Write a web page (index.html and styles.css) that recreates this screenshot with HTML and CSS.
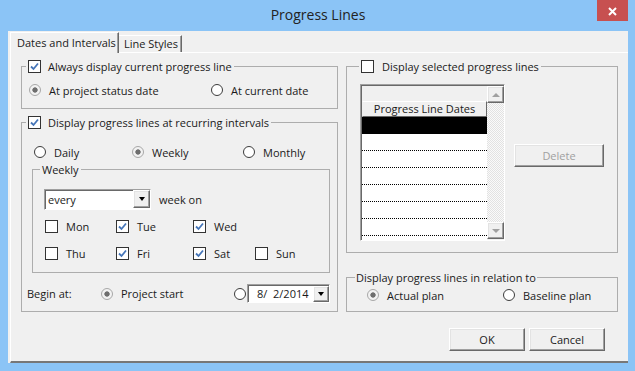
FILE: index.html
```html
<!DOCTYPE html>
<html lang="en">
<head>
  <meta charset="UTF-8" />
  <title>Progress Lines</title>
  <link rel="stylesheet" href="styles.css">
</head>
<body>
  <div class="window">

    <div class="titlebar">
      <span class="title">Progress Lines</span>
      <span class="close" title="Close">
        <svg width="31" height="21" viewBox="0 0 31 21"><path d="M12 8 L19 15 M19 8 L12 15" stroke="#fff" stroke-width="2" fill="none"/></svg>
      </span>
    </div>

    <div class="client">
      <div class="tabs">
        <div class="tab active">Dates and Intervals</div>
        <div class="tab">Line Styles</div>
      </div>

      <div class="page">
        <div class="columns">

          <!-- left column -->
          <div class="col col-left">
            <fieldset class="group g-current">
              <legend>
                <span class="check on"><svg width="11" height="11" viewBox="0 0 11 11"><path d="M2 5.5 L4.5 8 L9 2.5" stroke="#4575b8" stroke-width="1.8" fill="none"/></svg></span>
                <span>Always display current progress line</span>
              </legend>
              <div class="opt-row">
                <label class="opt"><span class="radio on"></span>At project status date</label>
                <label class="opt"><span class="radio"></span>At current date</label>
              </div>
            </fieldset>

            <fieldset class="group g-recurring">
              <legend>
                <span class="check on"><svg width="11" height="11" viewBox="0 0 11 11"><path d="M2 5.5 L4.5 8 L9 2.5" stroke="#4575b8" stroke-width="1.8" fill="none"/></svg></span>
                <span>Display progress lines at recurring intervals</span>
              </legend>
              <div class="opt-row">
                <label class="opt"><span class="radio"></span>Daily</label>
                <label class="opt"><span class="radio on"></span>Weekly</label>
                <label class="opt"><span class="radio"></span>Monthly</label>
              </div>

              <fieldset class="group g-weekly">
                <legend>Weekly</legend>
                <div class="every-row">
                  <div class="combo">
                    <span class="combo-text">every</span>
                    <span class="drop drop-combo"></span>
                  </div>
                  <span class="week-on">week on</span>
                </div>
                <div class="days">
                  <label class="opt day"><span class="check"></span>Mon</label>
                  <label class="opt day"><span class="check on"><svg width="11" height="11" viewBox="0 0 11 11"><path d="M2 5.5 L4.5 8 L9 2.5" stroke="#4575b8" stroke-width="1.8" fill="none"/></svg></span>Tue</label>
                  <label class="opt day"><span class="check on"><svg width="11" height="11" viewBox="0 0 11 11"><path d="M2 5.5 L4.5 8 L9 2.5" stroke="#4575b8" stroke-width="1.8" fill="none"/></svg></span>Wed</label>
                  <label class="opt day row-start"><span class="check"></span>Thu</label>
                  <label class="opt day"><span class="check on"><svg width="11" height="11" viewBox="0 0 11 11"><path d="M2 5.5 L4.5 8 L9 2.5" stroke="#4575b8" stroke-width="1.8" fill="none"/></svg></span>Fri</label>
                  <label class="opt day"><span class="check on"><svg width="11" height="11" viewBox="0 0 11 11"><path d="M2 5.5 L4.5 8 L9 2.5" stroke="#4575b8" stroke-width="1.8" fill="none"/></svg></span>Sat</label>
                  <label class="opt day"><span class="check"></span>Sun</label>
                </div>
              </fieldset>

              <div class="begin-row">
                <span class="begin-label">Begin at:</span>
                <label class="opt begin-start"><span class="radio on"></span>Project start</label>
                <span class="radio"></span>
                <div class="datebox">
                  <span class="date-text">8/&nbsp; 2/2014</span>
                  <span class="drop drop-date"></span>
                </div>
              </div>
            </fieldset>
          </div>

          <!-- right column -->
          <div class="col col-right">
            <fieldset class="group g-selected">
              <legend>
                <span class="check"></span>
                <span>Display selected progress lines</span>
              </legend>
              <div class="list-row">
                <div class="listbox">
                  <div class="lb-grid">
                    <div class="lb-blank"></div>
                    <div class="lb-head">Progress Line Dates</div>
                    <div class="lb-row current"></div>
                    <div class="lb-row"></div>
                    <div class="lb-row"></div>
                    <div class="lb-row"></div>
                    <div class="lb-row"></div>
                    <div class="lb-row"></div>
                    <div class="lb-row"></div>
                    <div class="lb-row"></div>
                  </div>
                  <div class="scrollbar">
                    <span class="sb-btn sb-up"></span>
                    <span class="sb-track"></span>
                    <span class="sb-btn sb-down"></span>
                  </div>
                </div>
                <button class="btn btn-delete" disabled>Delete</button>
              </div>
            </fieldset>

            <fieldset class="group g-relation">
              <legend>Display progress lines in relation to</legend>
              <div class="opt-row">
                <label class="opt"><span class="radio on"></span>Actual plan</label>
                <label class="opt"><span class="radio"></span>Baseline plan</label>
              </div>
            </fieldset>
          </div>
        </div>

        <div class="actions">
          <button class="btn">OK</button>
          <button class="btn">Cancel</button>
        </div>
      </div>
    </div>

  </div>
</body>
</html>
```

FILE: styles.css
```css
* {
  box-sizing: border-box;
}

body {
  margin: 0;
  font-family: "Open Sans", "Noto Sans", sans-serif;
  font-size: 11px;
  color: #1a1a1a;
  background: #8bc4f6;
}

/* Window frame */
.window {
  width: 635px;
  height: 371px;
  background: #8bc4f6;
  display: flex;
  flex-direction: column;
  padding: 0 7px 8px 8px;
}

.titlebar {
  flex: none;
  height: 31px;
  display: grid;
  grid-template-columns: 1fr auto 1fr;
  align-items: start;
}

.title {
  grid-column: 2;
  font-size: 14px;
  line-height: 29px;
  color: #222;
}

.close {
  grid-column: 3;
  justify-self: end;
  width: 31px;
  height: 21px;
  background: #c75050;
  display: flex;
}

.client {
  flex: 1;
  background: #f0f0f0;
  display: flex;
  flex-direction: column;
  padding-left: 2px;
}

/* Tabs */
.tabs {
  flex: none;
  height: 20px;
  margin-top: 1px;
  display: flex;
  align-items: flex-end;
}

.tab {
  height: 17px;
  width: 63px;
  line-height: 16px;
  padding-left: 5px;
  background: #f0f0f0;
  border-top: 1px solid #fff;
  border-right: 1px solid #696969;
  box-shadow: inset -1px 0 #a0a0a0;
  white-space: nowrap;
}

.tab.active {
  position: relative;
  z-index: 1;
  width: 109px;
  height: 21px;
  margin-bottom: -1px;
  line-height: 15px;
  padding: 2px 0 0 6px;
  border-left: 1px solid #fff;
}

.page {
  flex: 1;
  background: #f0f0f0;
  border-top: 1px solid #fff;
  border-left: 1px solid #fff;
  border-bottom: 2px solid #777;
  padding-left: 10px;
  display: flex;
  flex-direction: column;
}

.columns {
  display: flex;
  gap: 8px;
}

.col {
  display: flex;
  flex-direction: column;
  padding-top: 6px;
}

.col-left {
  width: 317px;
  gap: 6px;
}

.col-right {
  width: 272px;
  gap: 17px;
}

/* Group boxes */
.group {
  margin: 0;
  padding: 0;
  min-width: 0;
  border: 1px solid #adadad;
}

.group > legend {
  display: flex;
  align-items: center;
  gap: 7px;
  height: 15px;
  line-height: 15px;
  padding: 0 2px;
  margin-left: 4px;
  white-space: nowrap;
}

.g-current {
  padding: 8px 0 10px;
}

.g-current .opt-row {
  grid-template-columns: 182px auto;
  padding-left: 7px;
}

.g-recurring {
  padding: 14px 0 8px;
}

.g-recurring > .opt-row {
  grid-template-columns: 98px 111px auto;
  padding-left: 12px;
}

.g-weekly {
  margin: 2px 7px 0 10px;
  padding: 12px 0 11px;
}

.g-weekly > legend {
  margin-left: 7px;
}

.g-selected {
  padding: 0 0 11px;
}

.g-selected > legend {
  margin-left: 12px;
  gap: 8px;
}

.g-relation {
  padding: 2px 0 8px;
}

.g-relation > legend {
  margin-left: 8px;
  padding: 0 1px;
}

.g-relation .opt-row {
  grid-template-columns: 136px auto;
  padding-left: 20px;
}

/* Options */
.opt-row {
  display: grid;
  height: 16px;
}

.opt {
  display: flex;
  align-items: center;
  gap: 8px;
  height: 16px;
  white-space: nowrap;
}

.check {
  flex: none;
  width: 13px;
  height: 13px;
  border: 1px solid #333;
  background: #fff;
  display: flex;
}

.radio {
  flex: none;
  width: 12px;
  height: 12px;
  border: 1px solid #3c3c3c;
  border-radius: 50%;
  background: #fff;
}

.radio.on {
  border-color: #a8a8a8;
  background: radial-gradient(circle, #6e6e6e 0 2.3px, #f2f2f2 3px);
}

/* Weekly */
.every-row {
  display: flex;
  align-items: center;
  padding-left: 11px;
}

.combo {
  width: 107px;
  height: 21px;
  display: flex;
  background: #fff;
  border: 1px solid;
  border-color: #a0a0a0 #fff #fff #a0a0a0;
  box-shadow: inset 1px 1px #696969;
}

.combo-text {
  padding-left: 3px;
  line-height: 19px;
}

.week-on {
  margin-left: 8px;
}

.drop {
  margin-left: auto;
  background: #f0f0f0;
  border: 1px solid;
  border-color: #fff #696969 #696969 #fff;
  box-shadow: inset -1px -1px #a0a0a0, inset 1px 1px #e3e3e3;
  display: flex;
  align-items: center;
  justify-content: center;
}

.drop::after {
  content: "";
  border-left: 3.5px solid transparent;
  border-right: 3.5px solid transparent;
  border-top: 4px solid #000;
}

.drop-combo {
  width: 17px;
  height: 18px;
}

.days {
  display: grid;
  grid-template-columns: 71px 77px 62px auto;
  grid-auto-rows: 16px;
  row-gap: 11px;
  margin-top: 8px;
  padding-left: 12px;
}

.days .row-start {
  grid-column-start: 1;
}

/* Begin at */
.begin-row {
  display: flex;
  align-items: center;
  height: 19px;
  margin-top: 11px;
  padding-left: 5px;
}

.begin-label {
  width: 74px;
}

.begin-start {
  width: 133px;
}

.datebox {
  width: 83px;
  height: 19px;
  margin-left: 1px;
  display: flex;
  background: #fff;
  border: 1px solid;
  border-color: #a0a0a0 #fff #fff #a0a0a0;
  box-shadow: inset 1px 1px #696969;
}

.date-text {
  padding-left: 9px;
  line-height: 17px;
}

.drop-date {
  width: 16px;
  height: 16px;
  align-self: flex-end;
}

/* List of dates */
.list-row {
  display: flex;
  align-items: flex-start;
}

.listbox {
  width: 145px;
  height: 157px;
  margin: 10px 0 0 13px;
  padding: 1px 0 0 1px;
  display: flex;
  border: 1px solid;
  border-color: #a0a0a0 #fff #fff #a0a0a0;
  box-shadow: inset 1px 1px #696969;
  background: #f0f0f0;
}

.lb-grid {
  width: 125px;
  height: 154px;
  overflow: hidden;
  display: flex;
  flex-direction: column;
}

.lb-blank {
  flex: none;
  height: 15px;
}

.lb-head {
  flex: none;
  height: 16px;
  line-height: 14px;
  text-align: center;
  border: 1px solid;
  border-color: #fff #696969 #696969 #f0f0f0;
  white-space: nowrap;
}

.lb-row {
  flex: none;
  height: 17px;
  background: #fff;
  border-bottom: 1px dotted #000;
}

.lb-row.current {
  background: #000;
}

.scrollbar {
  width: 17px;
  height: 154px;
  display: flex;
  flex-direction: column;
  padding-bottom: 1px;
}

.sb-btn {
  flex: none;
  height: 17px;
  background: #f0f0f0;
  border: 1px solid;
  border-color: #fff #696969 #696969 #fff;
  box-shadow: inset -1px -1px #a0a0a0, inset 1px 1px #e3e3e3;
  display: flex;
  align-items: center;
  justify-content: center;
}

.sb-up::after {
  content: "";
  border-left: 4px solid transparent;
  border-right: 4px solid transparent;
  border-bottom: 4px solid #a0a0a0;
}

.sb-down::after {
  content: "";
  border-left: 4px solid transparent;
  border-right: 4px solid transparent;
  border-top: 4px solid #a0a0a0;
}

.sb-track {
  flex: 1;
  background: repeating-conic-gradient(#fafafa 0 25%, #e2e2e2 0 50%) 0 0 / 2px 2px;
}

/* Push buttons */
.btn {
  width: 76px;
  height: 23px;
  padding: 0;
  font: inherit;
  color: #1a1a1a;
  background: #f0f0f0;
  border: 1px solid;
  border-color: #fff #696969 #696969 #fff;
  box-shadow: inset -1px -1px #a0a0a0, inset 1px 1px #e3e3e3;
}

.btn-delete {
  width: 90px;
  margin: 70px 0 0 9px;
  color: #a0a0a0;
}

.actions {
  display: flex;
  justify-content: flex-end;
  gap: 4px;
  margin-top: 16px;
  padding-right: 23px;
}
```
